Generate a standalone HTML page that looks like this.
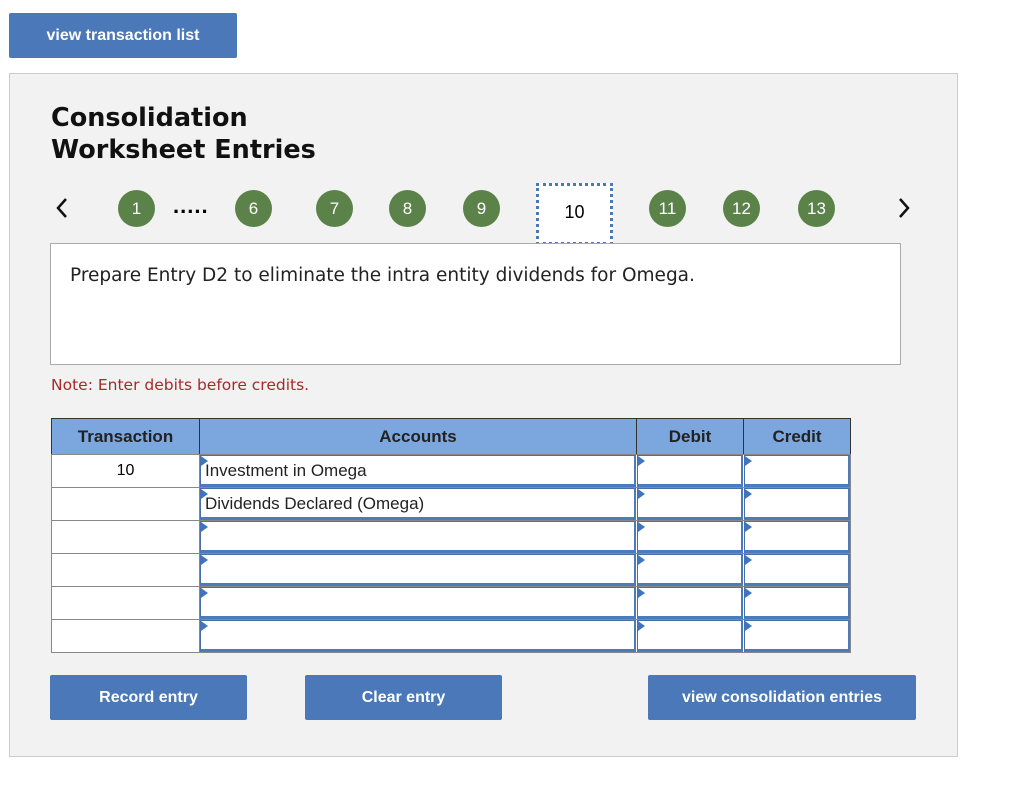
<!DOCTYPE html>
<html><head><style>
body{margin:0;width:1024px;height:787px;background:#fff;font-family:"Liberation Sans",Arial,sans-serif;position:relative;overflow:hidden}
.abs{position:absolute}
.btn{position:absolute;background:#4a78b8;color:#fff;font-weight:bold;font-size:16px;text-align:center;border-radius:2px}
.c{position:absolute;width:37px;height:37px;border-radius:50%;background:#5a8249;color:#fff;font-size:17px;text-align:center;line-height:37px}
.cell{position:absolute;box-sizing:border-box;border:1px solid #888;background:#fff}
.inp{position:absolute;box-sizing:border-box;background:#fff;border:1px solid #4a6fa8;border-bottom:3px solid #4a7bbf;border-right:2px solid #4a7bbf}
.tri{position:absolute;width:0;height:0;border-top:5px solid transparent;border-bottom:5px solid transparent;border-left:7px solid #3f74c0}
.hd{position:absolute;background:#7ba7de;font-weight:bold;font-size:17px;color:#222;text-align:center;line-height:36px;box-sizing:border-box;border:1px solid #333}
</style></head><body>
<div class="btn" style="left:9px;top:13px;width:228px;height:45px;line-height:45px">view transaction list</div>
<div class="abs" style="left:9px;top:73px;width:947px;height:682px;background:#f2f2f2;border:1px solid #ccc"></div>
<div class="abs" style="left:51px;top:102px;font-family:'DejaVu Sans',sans-serif;font-size:25.5px;font-weight:bold;line-height:32px;color:#111">Consolidation<br>Worksheet Entries</div>
<svg class="abs" style="left:55px;top:197px" width="14" height="22"><path d="M11 2 L3 11 L11 20" stroke="#111" stroke-width="2.5" fill="none"/></svg>
<svg class="abs" style="left:897px;top:197px" width="14" height="22"><path d="M3 2 L11 11 L3 20" stroke="#111" stroke-width="2.5" fill="none"/></svg>
<div class="c" style="left:118px;top:190px">1</div>
<div class="abs" style="left:173px;top:193px;font-size:22px;font-weight:bold;letter-spacing:1px">.....</div>
<div class="c" style="left:235px;top:190px">6</div>
<div class="c" style="left:316px;top:190px">7</div>
<div class="c" style="left:389px;top:190px">8</div>
<div class="c" style="left:463px;top:190px">9</div>
<div class="abs" style="left:536px;top:183px;width:77px;height:62px;background:#fff;border:3px dotted #4a78b8;box-sizing:border-box;text-align:center;line-height:52px;font-size:18px">10</div>
<div class="c" style="left:649px;top:190px">11</div>
<div class="c" style="left:723px;top:190px">12</div>
<div class="c" style="left:798px;top:190px">13</div>
<div class="abs" style="left:50px;top:243px;width:851px;height:122px;background:#fff;border:1px solid #aaa;box-sizing:border-box"></div>
<div class="abs" style="left:70px;top:265px;font-family:'DejaVu Sans',sans-serif;font-size:18.5px;color:#222">Prepare Entry D2 to eliminate the intra entity dividends for Omega.</div>
<div class="abs" style="left:51px;top:376px;font-family:'DejaVu Sans',sans-serif;font-size:15.5px;color:#a52a2a">Note: Enter debits before credits.</div>
<div class="hd" style="left:51px;top:418px;width:149px;height:37px">Transaction</div>
<div class="hd" style="left:199px;top:418px;width:438px;height:37px">Accounts</div>
<div class="hd" style="left:636px;top:418px;width:108px;height:37px">Debit</div>
<div class="hd" style="left:743px;top:418px;width:108px;height:37px">Credit</div>
<div id="rows"></div>
<script>
var ys=[454,487,520,553,586,619],h='';
var acc=["Investment in Omega","Dividends Declared (Omega)","","","",""];
ys.forEach(function(y,i){
h+='<div class="cell" style="left:51px;top:'+y+'px;width:149px;height:34px;text-align:center;line-height:32px;font-size:16px">'+(i==0?'10':'')+'</div>';
h+='<div class="cell" style="left:199px;top:'+y+'px;width:652px;height:34px;background:#fff"></div>';
[[200,436],[637,106],[744,106]].forEach(function(c,j){
h+='<div class="inp" style="left:'+c[0]+'px;top:'+(y+1)+'px;width:'+c[1]+'px;height:32px;font-size:17px;line-height:30px;padding-left:4px;color:#222">'+(j==0?acc[i]:'')+'</div>';
h+='<div class="tri" style="left:'+(c[0]+1)+'px;top:'+(y+2)+'px"></div>';});
});
document.getElementById('rows').innerHTML=h;
</script>
<div class="btn" style="left:50px;top:675px;width:197px;height:45px;line-height:45px">Record entry</div>
<div class="btn" style="left:305px;top:675px;width:197px;height:45px;line-height:45px">Clear entry</div>
<div class="btn" style="left:648px;top:675px;width:268px;height:45px;line-height:45px">view consolidation entries</div>
</body></html>
